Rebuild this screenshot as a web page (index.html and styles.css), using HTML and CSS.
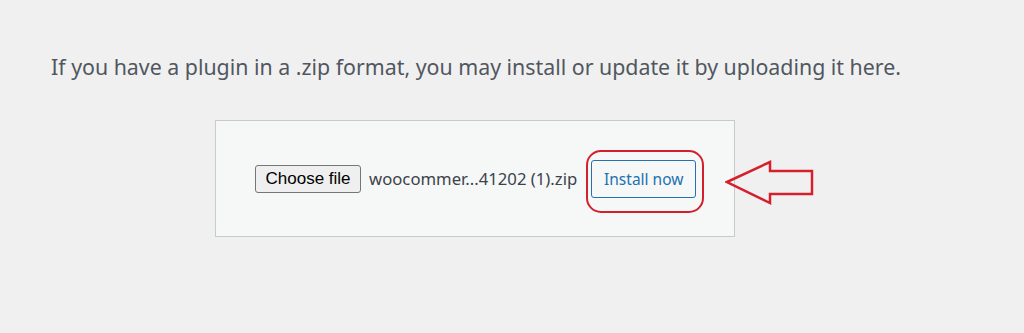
FILE: index.html
```html
<!DOCTYPE html>
<html lang="en">
  <head>
    <meta charset="UTF-8">
    <title>Upload Plugin</title>
    <link rel="stylesheet" href="styles.css">
  </head>
  <body>
    <p class="help">If you have a plugin in a .zip format, you may install or update it by uploading it here.</p>
    <form class="upload">
      <span class="file">
        <button type="button" class="pick">Choose file</button>
        <span class="name">woocommer...41202 (1).zip</span>
      </span>
      <span class="mark">
        <button type="button" class="install">Install now</button>
      </span>
      <svg class="arrow" width="92" height="46" viewBox="0 0 92 46">
        <path d="M2 23 L45 3 L45 12 L87 12 L87 35 L45 35 L45 44 Z" fill="none" stroke="#d3202c" stroke-width="2.5" stroke-linejoin="miter"/>
      </svg>
    </form>
  </body>
</html>
```

FILE: styles.css
```css
body {margin: 0; background: #f0f0f1; color: #3c434a;
  font-family: 'Noto Sans', 'Open Sans', sans-serif;}
.help {color: #50575e; font-size: 21.35px; margin: 52px 0 0 51px;}
.upload {position: relative; box-sizing: border-box; width: 520px; height: 117px;
  margin: 39px 0 0 215px; background: #f6f7f7; border: 1px solid #c9cacc;
  display: flex; align-items: center; padding-left: 39px;}
.file {display: flex; align-items: center; gap: 8px;}
.pick {font-family: 'Liberation Sans', Arial, sans-serif; font-size: 17px;
  color: #000; background: #efefef; border: 1px solid #767676;
  border-radius: 3px; height: 28px; padding: 0 9.5px;}
.name {font-size: 16.7px; color: #3c434a;}
.mark {position: relative; margin-left: 14px; display: flex;}
.mark::before {content: ''; position: absolute; inset: -10px -8px -15px -5px;
  border: 2.5px solid #d3202c; border-radius: 15px;}
.install {font-family: inherit; font-size: 15.5px; color: #2271b1;
  background: #f6f7f7; border: 1px solid #2271b1; border-radius: 3px;
  height: 38px; width: 105px; padding: 0; white-space: nowrap;}
.arrow {position: absolute; left: 509px; top: 38px;}
```
